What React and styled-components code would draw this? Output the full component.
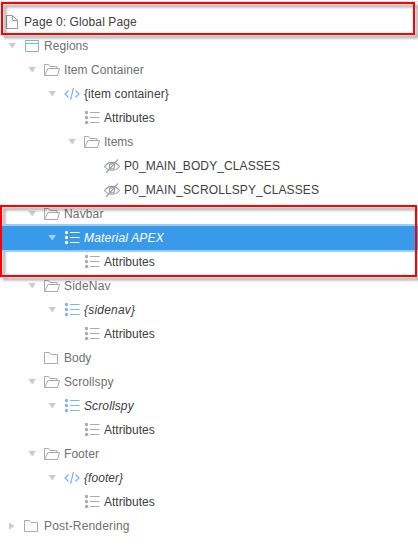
import React from "react";
import styled, { createGlobalStyle } from "styled-components";

const GlobalStyle = createGlobalStyle`
  body { margin: 0; background: #fff; }
`;

const Panel = styled.main`
  position: relative;
  box-sizing: border-box;
  width: 418px;
  height: 549px;
  padding-top: 10px;
  overflow: hidden;
  background: #fff;
  font: 12px/24px "Liberation Sans", Arial, sans-serif;
  &::before {
    content: "";
    position: absolute;
    top: 1px;
    left: 0;
    right: 0;
    height: 1px;
    background: #e0e0e0;
  }
`;

const Row = styled.div`
  display: flex;
  align-items: center;
  height: 24px;
  padding-left: ${(p) => 4 + p.$depth * 20}px;
  position: relative;
  z-index: ${(p) => (p.$selected ? 2 : 0)};
  background: ${(p) => (p.$selected ? "#3a9aea" : "transparent")};
  box-shadow: ${(p) => (p.$selected ? "0 -2px #9bcdf5, 0 2px #9bcdf5" : "none")};
`;

const Toggle = styled.svg`
  width: 16px;
  height: 16px;
  margin-right: 4px;
  flex: none;
  fill: ${(p) => (p.$selected ? "#a5d0f6" : "#cbcbcb")};
`;

const Glyph = styled.svg`
  width: 16px;
  height: 16px;
  margin-right: 4px;
  flex: none;
  fill: none;
  stroke: ${(p) => p.$color};
  overflow: visible;
`;

const Label = styled.span`
  white-space: nowrap;
  color: ${(p) => (p.$selected ? "#fff" : p.$muted ? "#707070" : "#404040")};
  font-style: ${(p) => (p.$italic ? "italic" : "normal")};
  letter-spacing: ${(p) => p.$tracking || 0}px;
`;

const Frame = styled.div`
  position: absolute;
  z-index: 3;
  box-sizing: border-box;
  top: ${(p) => p.$top}px;
  left: ${(p) => p.$left}px;
  width: ${(p) => p.$width}px;
  height: ${(p) => p.$height}px;
  border: 2px solid #f00;
  pointer-events: none;
`;

const FrameShadow = styled(Frame)`
  z-index: 1;
  filter: drop-shadow(3px 3px 1.5px rgba(0, 0, 0, 0.45));
`;

const GREY = "#aaa";
const BLUE = "#7ab6f0";

const shapes = {
  page: <path d="M2.5 1.5h6l5 5v8h-11zM8.5 1.5v5h5" />,
  region: <path d="M1.5 2.5h13v11h-13zM1.5 5.5h13" />,
  open: <path d="M.5 13.5v-11h4l1.500 2h7v2M.5 13.500L4 6.500h11.500l-2 7z" />,
  folder: <path d="M.5 13.500v-11h5l1.500 2h6.500v9z" />,
  code: <path strokeWidth="1.2" d="M4.500 4.500L1 8l3.500 3.500M11.500 4.500L15 8l-3.500 3.500M9.500 2l-3 12" />,
  list: (
    <>
      <path d="M6 3.500h9.500M6 8.500h9.500M6 13.500h9.500" transform="translate(0 -1)" />
      <path
        d="M2.500 2.500h.01M2.500 7.500h.01M2.500 12.500h.01"
        strokeWidth="3.300"
        strokeLinecap="round"
      />
    </>
  ),
  hidden: (
    <g stroke="#98a0a6" strokeWidth="1.150">
      <path d="M.5 8.500C4.500 3 11.500 3 15.500 8.500C11.500 13.500 4.500 13.500 .5 8.500z" />
      <circle cx="8" cy="8.300" r="2.700" />
      <path d="M14 1.500L2 15" />
    </g>
  ),
};

const nodes = [
  { depth: 0, icon: "page", label: "Page 0: Global Page", root: true, color: "#999", tracking: 0.11 },
  { depth: 0, icon: "region", label: "Regions", open: true, muted: true, color: BLUE, tracking: 0.05 },
  { depth: 1, icon: "open", label: "Item Container", open: true, muted: true, tracking: 0.08 },
  { depth: 2, icon: "code", label: "{item container}", open: true, color: BLUE, tracking: 0.09 },
  { depth: 3, icon: "list", label: "Attributes" },
  { depth: 3, icon: "open", label: "Items", open: true, muted: true },
  { depth: 4, icon: "hidden", label: "P0_MAIN_BODY_CLASSES", tracking: 0.1 },
  { depth: 4, icon: "hidden", label: "P0_MAIN_SCROLLSPY_CLASSES", tracking: 0.12 },
  { depth: 1, icon: "open", label: "Navbar", open: true, muted: true, tracking: 0.15 },
  { depth: 2, icon: "list", label: "Material APEX", open: true, italic: true, selected: true, color: "#fff", tracking: 0.18 },
  { depth: 3, icon: "list", label: "Attributes" },
  { depth: 1, icon: "open", label: "SideNav", open: true, muted: true, tracking: 0.2 },
  { depth: 2, icon: "list", label: "{sidenav}", open: true, italic: true, color: BLUE, tracking: 0.2 },
  { depth: 3, icon: "list", label: "Attributes" },
  { depth: 1, icon: "folder", label: "Body", muted: true },
  { depth: 1, icon: "open", label: "Scrollspy", open: true, muted: true, tracking: 0.1 },
  { depth: 2, icon: "list", label: "Scrollspy", open: true, italic: true, color: BLUE, tracking: 0.12 },
  { depth: 3, icon: "list", label: "Attributes" },
  { depth: 1, icon: "open", label: "Footer", open: true, muted: true, tracking: 0.06 },
  { depth: 2, icon: "code", label: "{footer}", open: true, italic: true, color: BLUE, tracking: 0.06 },
  { depth: 3, icon: "list", label: "Attributes" },
  { depth: 0, icon: "folder", label: "Post-Rendering", open: false, muted: true, tracking: 0.16 },
];

const frames = [
  { $top: 2, $left: 1, $width: 414, $height: 33 },
  { $top: 205, $left: 0, $width: 417, $height: 72 },
];

function TreeRow({ node }) {
  return (
    <Row $depth={node.depth} $selected={node.selected}>
      {!node.root && (
        <Toggle viewBox="0 0 16 16" $selected={node.selected}>
          {node.open === true && <path d="M4.500 5h7.500L8.200 10.500z" />}
          {node.open === false && <path d="M5 4.500v7L10.500 8z" />}
        </Toggle>
      )}
      <Glyph viewBox="0 0 16 16" $color={node.color || GREY}>
        {shapes[node.icon]}
      </Glyph>
      <Label
        $muted={node.muted}
        $italic={node.italic}
        $selected={node.selected}
        $tracking={node.tracking}
      >
        {node.label}
      </Label>
    </Row>
  );
}

export default function App() {
  return (
    <>
      <GlobalStyle />
      <Panel>
        {nodes.map((node, i) => (
          <TreeRow key={i} node={node} />
        ))}
        {frames.map((f) => (
          <React.Fragment key={f.$top}>
            <FrameShadow {...f} />
            <Frame {...f} />
          </React.Fragment>
        ))}
      </Panel>
    </>
  );
}
